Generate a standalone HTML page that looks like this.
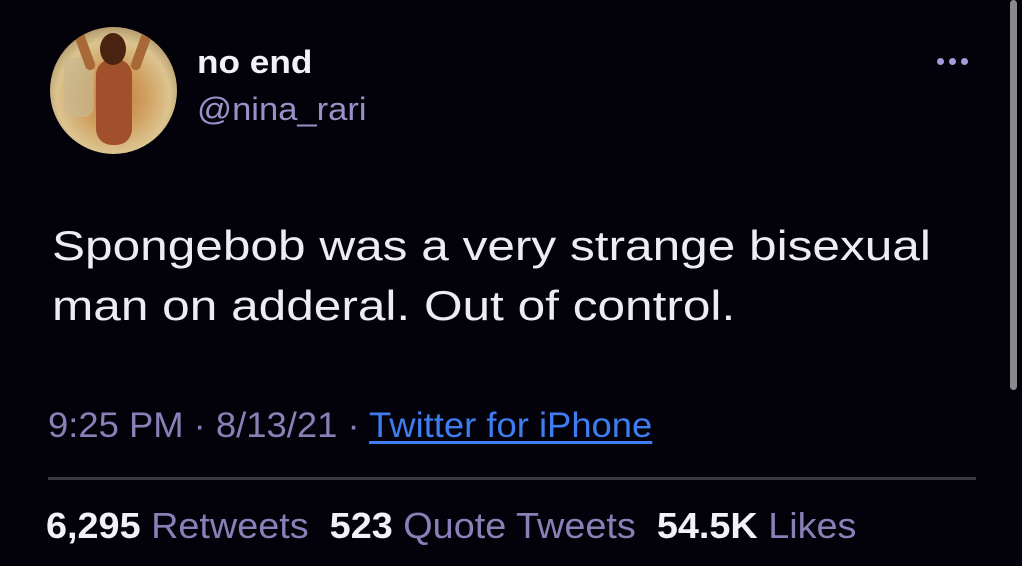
<!DOCTYPE html>
<html><head><meta charset="utf-8"><style>
html,body{margin:0;padding:0;background:#030109;width:1022px;height:566px;overflow:hidden;position:relative;font-family:"Liberation Sans",Arial,sans-serif}
.a{position:absolute;white-space:nowrap;transform-origin:left top}
</style></head><body>
<div class="a" style="left:50px;top:27px;width:127px;height:127px;border-radius:50%;background:radial-gradient(circle at 50% 55%,#c07a38 0%,#d0a060 35%,#dcc490 60%,#6a5030 100%);overflow:hidden">
  <div style="position:absolute;left:14px;top:30px;width:30px;height:60px;border-radius:10px;background:#c8b890;opacity:.7"></div>
  <div style="position:absolute;left:46px;top:32px;width:36px;height:86px;border-radius:16px;background:#a0502a"></div>
  <div style="position:absolute;left:50px;top:6px;width:26px;height:32px;border-radius:50%;background:#4a2410"></div>
  <div style="position:absolute;left:30px;top:4px;width:10px;height:40px;border-radius:5px;background:#a86838;transform:rotate(-20deg)"></div>
  <div style="position:absolute;left:86px;top:4px;width:10px;height:40px;border-radius:5px;background:#a86838;transform:rotate(20deg)"></div>
</div>
<div class="a" style="left:197px;top:44px;font-size:32px;font-weight:bold;color:#f2f0f8;transform:scaleX(1.1)">no end</div>
<div class="a" style="left:197px;top:91px;font-size:32px;color:#9b90c8;transform:scaleX(1.08)">@nina_rari</div>
<div class="a" style="left:937px;top:58px;width:7px;height:7px;border-radius:50%;background:#a79ad8;box-shadow:12px 0 0 #a79ad8,24px 0 0 #a79ad8"></div>
<div class="a" style="left:1010px;top:0;width:7px;height:390px;border-radius:4px;background:#8a8a8e"></div>
<div class="a" style="left:52px;top:216px;font-size:42px;color:#ececf2;line-height:60px;transform:scaleX(1.18)">Spongebob was a very strange bisexual<br>man on adderal. Out of control.</div>
<div class="a" style="left:48px;top:406px;font-size:35px;color:#8a80b8;transform:scaleX(1.04)">9:25 PM · 8/13/21 · <span style="color:#3d7df0;text-decoration:underline;text-underline-offset:4px">Twitter for iPhone</span></div>
<div class="a" style="left:48px;top:477px;width:928px;height:3px;background:#3a3840"></div>
<div class="a" style="left:46px;top:505px;font-size:36px;color:#8a80b8;transform:scaleX(1.05)"><b style="color:#f2f0f8">6,295</b> Retweets&nbsp; <b style="color:#f2f0f8">523</b> Quote Tweets&nbsp; <b style="color:#f2f0f8">54.5K</b> Likes</div>
</body></html>
